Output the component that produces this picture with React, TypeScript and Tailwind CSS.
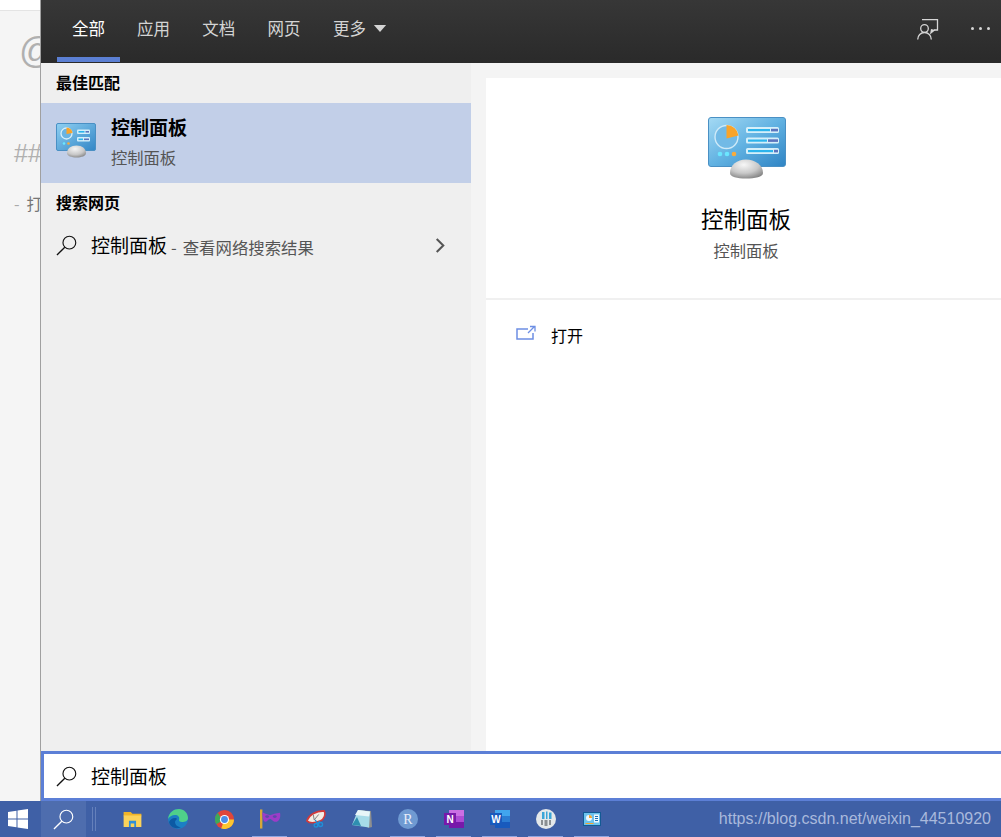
import React from 'react';

const FONT = { fontFamily: '"Noto Sans CJK SC", "Liberation Sans", sans-serif' };
const LATIN = { fontFamily: '"Liberation Sans", sans-serif' };

const SearchGlyph = ({ className, color }: { className: string; color: string }) => (
  <svg viewBox="0 0 22 22" className={className} fill="none" stroke={color} strokeWidth="1.2">
    <circle cx="14" cy="8" r="6.700" />
    <path d="M9.200 12.800 1 21" strokeWidth="1.400" />
  </svg>
);

const ControlPanelIcon = ({ className }: { className: string }) => (
  <svg viewBox="0 0 78 62" className={className}>
    <defs>
      <linearGradient id="cpScreen" x1="0" y1="0" x2="1" y2="1">
        <stop offset="0" stopColor="#a5daf4" />
        <stop offset="0.5" stopColor="#62b2e2" />
        <stop offset="1" stopColor="#2f84c4" />
      </linearGradient>
      <radialGradient id="cpDome" cx="0.42" cy="0.28" r="0.8">
        <stop offset="0" stopColor="#f7f7f7" />
        <stop offset="0.55" stopColor="#c9c9c9" />
        <stop offset="1" stopColor="#7c7c7c" />
      </radialGradient>
    </defs>
    <rect x="0.500" y="0.500" width="77" height="49" rx="2.500" fill="url(#cpScreen)" stroke="#4a90c4" />
    <circle cx="18.500" cy="20" r="11.500" fill="#72bae6" stroke="#cfeaf8" strokeWidth="1.400" />
    <path d="M18.500 8a12 12 0 0 1 12 10.500l-12 3z" fill="#f9a42a" />
    <rect x="38" y="10" width="33" height="6" rx="1.500" fill="#d5effa" />
    <rect x="40" y="12" width="22" height="2.200" fill="#2cb4ec" />
    <rect x="63" y="11.800" width="7" height="2.600" fill="#5b74bd" />
    <rect x="38" y="20.500" width="33" height="6" rx="1.500" fill="#d5effa" />
    <rect x="40" y="22.500" width="19" height="2.200" fill="#2cb4ec" />
    <rect x="60" y="22.300" width="10" height="2.600" fill="#5b74bd" />
    <rect x="38" y="31" width="33" height="6" rx="1.500" fill="#d5effa" />
    <rect x="40" y="33" width="25" height="2.200" fill="#2cb4ec" />
    <rect x="66" y="32.800" width="4" height="2.600" fill="#5b74bd" />
    <circle cx="12" cy="37" r="2.300" fill="#6be6ff" />
    <circle cx="19" cy="37" r="2.300" fill="#6be6ff" />
    <circle cx="26" cy="37" r="2.300" fill="#f8ab3c" />
    <path d="M22 56c0-8 7-13.500 16-13.500S55 48 55 56c0 4-8 5.500-17 5.500S22 60 22 56z" fill="url(#cpDome)" />
  </svg>
);

// the 32px version of the icon has only two bars and a larger dome
const SmallPanelIcon = ({ className }: { className: string }) => (
  <svg viewBox="0 0 40 35" className={className}>
    <defs>
      <linearGradient id="cpSmall" x1="0" y1="0" x2="1" y2="1">
        <stop offset="0" stopColor="#8fd0f2" />
        <stop offset="1" stopColor="#3286c6" />
      </linearGradient>
      <radialGradient id="cpSmallDome" cx="0.42" cy="0.28" r="0.8">
        <stop offset="0" stopColor="#f5f5f5" />
        <stop offset="0.6" stopColor="#c8c8c8" />
        <stop offset="1" stopColor="#7f7f7f" />
      </radialGradient>
    </defs>
    <rect x="0.500" y="0.500" width="39" height="27" rx="1.500" fill="url(#cpSmall)" stroke="#4a90c4" />
    <circle cx="10.500" cy="10.500" r="5.500" fill="#6ab4e2" stroke="#d8f0fb" strokeWidth="1.300" />
    <path d="M10.500 4.500a6 6 0 0 1 6 5.500l-6 1z" fill="#f9a42a" />
    <rect x="21" y="6.500" width="13" height="4.500" rx="1" fill="#d5effa" />
    <rect x="22.500" y="8" width="6" height="1.600" fill="#2cb4ec" />
    <rect x="29.500" y="8" width="3.500" height="1.600" fill="#5b74bd" />
    <rect x="21" y="14" width="13" height="4.500" rx="1" fill="#d5effa" />
    <rect x="22.500" y="15.500" width="4.500" height="1.600" fill="#2cb4ec" />
    <rect x="28" y="15.500" width="5" height="1.600" fill="#5b74bd" />
    <circle cx="8" cy="20.500" r="1.300" fill="#6be6ff" />
    <circle cx="12.500" cy="20.500" r="1.300" fill="#f8ab3c" />
    <path d="M11 30c0-4.500 4-7.500 9.500-7.500S30 25.500 30 30c0 3-4.500 4.500-9.500 4.500S11 33 11 30z" fill="url(#cpSmallDome)" />
  </svg>
);

const TaskIcon = ({ active, children }: { active?: boolean; children: React.ReactNode }) => (
  <div className="relative flex h-9 w-[46px] items-center justify-center">
    {children}
    {active && <div className="absolute bottom-0 left-[5px] h-[1px] w-[35px] bg-[#8fa6e0]" />}
  </div>
);

const tabs = ['应用', '文档', '网页'];

export default function App() {
  return (
    <div className="flex h-[837px] w-[1001px] flex-col overflow-hidden bg-white" style={FONT}>
      <div className="flex min-h-0 flex-1">
        {/* page behind the search flyout */}
        <div className="w-10 shrink-0 overflow-hidden bg-[#f5f5f5] text-[#b0b0b0]">
          <div className="h-[11px] border-b border-[#e4e4e4] bg-white" />
          <div className="mt-[15px] ml-[19px] text-[36px] leading-[50px] whitespace-nowrap" style={LATIN}>@</div>
          <div className="mt-[62px] ml-[14px] text-[25px] leading-[30px] whitespace-nowrap" style={LATIN}>##</div>
          <div className="mt-[23px] ml-[14px] flex text-[16px] leading-6 whitespace-nowrap text-[#777]">
            <span className="text-[#aaa]">-</span>
            <span className="ml-[7px]">打开</span>
          </div>
        </div>

        <div className="flex min-w-0 flex-1 flex-col border-l border-[#a0a0a0]">
          {/* tab bar */}
          <div className="flex h-[63px] shrink-0 items-stretch bg-gradient-to-b from-[#373737] to-[#2a2a2a] text-[16.5px] text-[#d4d4d4]">
            <div className="ml-4 flex w-[63px] flex-col items-center justify-between text-white">
              <span className="mt-[16px] leading-6">全部</span>
              <div className="mb-[1px] h-[5px] w-full bg-[#5b7fd3]" />
            </div>
            <div className="flex gap-[32.300px] pt-[16px] pl-[17px] leading-6">
              {tabs.map(t => (
                <span key={t}>{t}</span>
              ))}
            </div>
            <div className="ml-[32.300px] flex gap-[7px] pt-[16px] leading-6">
              <span>更多</span>
              <svg viewBox="0 0 14 8" className="mt-[9px] h-[7px] w-[14px]" fill="#d4d4d4"><path d="M0 0h14L7 8z" /></svg>
            </div>
            <div className="ml-auto flex items-start">
              <svg viewBox="0 0 22 21" className="mt-[19px] mr-[32px] h-[21px] w-[22px]" fill="none" stroke="#d6d6d6" strokeWidth="1.300">
                <path d="M5 .7h15.500V11H17" />
                <path d="M13 15.500l1-5.500 4.500 1z" fill="#d6d6d6" stroke="none" />
                <circle cx="7.500" cy="9.500" r="3.800" />
                <path d="M.7 20.500c0-4 3-7 6.800-7s6.800 3 6.800 7" />
              </svg>
              <div className="mt-[27px] mr-[11px] flex gap-[5px]">
                <span className="h-[3px] w-[3px] rounded-full bg-[#d6d6d6]" />
                <span className="h-[3px] w-[3px] rounded-full bg-[#d6d6d6]" />
                <span className="h-[3px] w-[3px] rounded-full bg-[#d6d6d6]" />
              </div>
            </div>
          </div>

          <div className="flex min-h-0 flex-1">
            {/* results */}
            <div className="w-[430px] shrink-0 bg-[#efefef]">
              <div className="h-10 pt-[7px] pl-[15px] text-[16px] leading-6 font-bold text-black">最佳匹配</div>
              <div className="flex h-20 bg-[#c2cfe8]">
                <SmallPanelIcon className="mt-5 ml-[15px] h-[35px] w-10 shrink-0" />
                <div className="ml-[15px]">
                  <div className="mt-[10px] text-[19px] leading-[28px] font-bold text-black">控制面板</div>
                  <div className="mt-[4px] text-[16.300px] leading-6 text-[#555]">控制面板</div>
                </div>
              </div>
              <div className="h-10 pt-[7px] pl-[15px] text-[16px] leading-6 font-bold text-black">搜索网页</div>
              <div className="flex h-[44px] items-center pl-[15px]">
                <SearchGlyph className="h-[21px] w-[21px]" color="#111" />
                <span className="ml-[14px] text-[19px] leading-7 text-black">控制面板</span>
                <span className="mt-[3px] ml-1 text-[16.400px] leading-7 whitespace-nowrap text-[#555]">
                  -<span className="ml-[6px]">查看网络搜索结果</span>
                </span>
                <svg viewBox="0 0 10 16" className="mr-[26px] ml-auto h-[15px] w-[10px]" fill="none" stroke="#555" strokeWidth="2.200"><path d="M1.500 1l7 7-7 7" /></svg>
              </div>
            </div>

            {/* preview */}
            <div className="min-w-0 flex-1 bg-[#f4f4f4] pt-[15px] pl-[15px]">
              <div className="flex h-full flex-col bg-white">
                <div className="flex h-[222px] shrink-0 flex-col items-center border-b-2 border-[#f0f0f0] pl-[5px]">
                  <ControlPanelIcon className="mt-[39px] ml-[2px] h-[62px] w-[78px]" />
                  <div className="mt-[23px] text-[22.500px] leading-8 text-black">控制面板</div>
                  <div className="mt-[4px] text-[16.300px] leading-6 text-[#555]">控制面板</div>
                </div>
                <div className="flex items-center pt-[23px] pl-[30px]">
                  <svg viewBox="0 0 20 16" className="mb-[4px] h-4 w-5" fill="none" stroke="#6d8fe4" strokeWidth="1.500">
                    <path d="M12 4H1v10h16V8" />
                    <path d="M12 8l6-6M14 1.500h5v5" strokeWidth="1.300" />
                  </svg>
                  <span className="ml-[15px] text-[16px] leading-6 text-black">打开</span>
                </div>
              </div>
            </div>
          </div>

          {/* search box */}
          <div className="flex h-[50px] shrink-0 items-center border-[3px] border-r-0 border-[#5c7fd6] bg-white pl-[12px]">
            <SearchGlyph className="h-[21px] w-[21px]" color="#111" />
            <span className="ml-[14px] text-[19px] leading-7 text-black">控制面板</span>
          </div>
        </div>
      </div>

      {/* taskbar */}
      <div className="flex h-9 shrink-0 items-center bg-[#3f60a6]">
        <div className="flex h-9 w-[41px] items-center pl-2">
          <svg viewBox="0 0 20 20" className="h-5 w-5" fill="#fff">
            <path d="M0 3l8.500-1.200V9.500H0zM9.500 1.600 20 0v9.500H9.500zM0 10.500h8.500v7.700L0 17zM9.500 10.500H20V20L9.500 18.400z" />
          </svg>
        </div>
        <div className="flex h-9 w-[45px] items-center justify-center bg-[#4e6dae]">
          <SearchGlyph className="h-[21px] w-[21px]" color="#fff" />
        </div>
        <div className="ml-[6px] flex h-6 gap-[2px]">
          <div className="w-[1px] bg-[#6480bb]" />
          <div className="w-[1px] bg-[#6480bb]" />
        </div>
        <div className="ml-[13px] flex items-center">
          <TaskIcon>
            <svg viewBox="0 0 20 18" className="h-[16px] w-[19px]">
              <path d="M0 1h8l2 2h10v3H0z" fill="#f0b429" />
              <path d="M0 5h20v13H0z" fill="#fbd25a" />
              <path d="M6 11h8v7h-2v-4H8v4H6z" fill="#2f8fd8" />
            </svg>
          </TaskIcon>
          <TaskIcon>
            <svg viewBox="0 0 20 20" className="h-5 w-5">
              <circle cx="10" cy="10" r="10" fill="#1b7fc4" />
              <path d="M0 10C1 3 6 0 11 0c5 0 9 4 9 9 0 3-3 4-6 4-2 0-3-1-3-2 1-3-1-5-4-5-3 0-6 2-7 4z" fill="#4fd08a" />
              <path d="M7 13c0 3 3 5 6 5-5 3-11 0-12-5 1-2 3-4 6-4 1 0 2 .5 2 1-1 1-2 2-2 3z" fill="#0c59a4" />
            </svg>
          </TaskIcon>
          <TaskIcon>
            <svg viewBox="0 0 20 20" className="h-[19px] w-[19px]">
              <circle cx="10" cy="10" r="10" fill="#e0463a" />
              <path d="M10 10 1.300 15A10 10 0 0 1 3 3l4 7z" fill="#3da95a" />
              <path d="M10 10l-3.500 9.400A10 10 0 0 0 20 10z" fill="#fbc531" />
              <circle cx="10" cy="10" r="4.800" fill="#fff" />
              <circle cx="10" cy="10" r="3.600" fill="#4a8ce8" />
            </svg>
          </TaskIcon>
          <TaskIcon active>
            <svg viewBox="0 0 22 20" className="h-5 w-[21px]">
              <rect x="0" y="0" width="2.500" height="20" fill="#d8a838" />
              <path d="M2.500 3c3 2 5 2 8 3 3-1 6-2 10.500-2.500 1 5-1 9.500-4.500 9.500-3 0-4-3-6-3s-3 3-5 3-3-5-3-10z" fill="#9c3cc8" />
              <ellipse cx="7.500" cy="7.500" rx="2" ry="1.400" fill="#5a4aa8" />
              <ellipse cx="15.500" cy="7.500" rx="2" ry="1.400" fill="#5a4aa8" />
            </svg>
          </TaskIcon>
          <TaskIcon>
            <svg viewBox="0 0 22 20" className="h-5 w-5">
              <path d="M1 12C3 6 10 1 20 1c2 4 0 9-4 11-5 2-12 3-15 0z" fill="#f3eee6" stroke="#d23a3a" strokeWidth="1.800" />
              <path d="M9 11 8 5M9 11l5-6" stroke="#777" strokeWidth="1" />
              <circle cx="16" cy="16" r="2.200" fill="none" stroke="#1f8fd8" strokeWidth="1.500" />
              <circle cx="11" cy="17" r="2" fill="none" stroke="#1f8fd8" strokeWidth="1.500" />
              <path d="M10 11l3 4M15 12l-2 3" stroke="#1f8fd8" strokeWidth="1.400" />
            </svg>
          </TaskIcon>
          <TaskIcon>
            <svg viewBox="0 0 20 20" className="h-5 w-5">
              <path d="M6 1l13 1 1 16-4 1z" fill="#8f8f8f" />
              <path d="M6 1l12 1.500-1 16L0 16z" fill="#a6dbe8" />
              <path d="M6 1l12 1.500-1 5L3 6z" fill="#e8f6f8" />
              <path d="M0 16l5-8 4 9z" fill="#2f8fb0" />
            </svg>
          </TaskIcon>
          <TaskIcon active>
            <div className="flex h-5 w-5 items-center justify-center rounded-full bg-[#6f9ad2] text-[14px] text-[#e8eef8]" style={{ fontFamily: '"Liberation Serif", serif' }}>R</div>
          </TaskIcon>
          <TaskIcon active>
            <div className="relative h-[18px] w-5">
              <div className="ml-[5px] flex h-[18px] w-[15px] flex-col">
                <div className="flex-1 bg-[#ca6fe4]" />
                <div className="flex-1 bg-[#ae4bd5]" />
                <div className="flex-1 bg-[#7719aa]" />
              </div>
              <div className="absolute top-[3px] left-0 flex h-3 w-3 items-center justify-center bg-[#7719aa] text-[10px] font-bold text-white" style={LATIN}>N</div>
            </div>
          </TaskIcon>
          <TaskIcon active>
            <div className="relative h-[18px] w-5">
              <div className="ml-[5px] flex h-[18px] w-[15px] flex-col">
                <div className="flex-1 bg-[#41a5ee]" />
                <div className="flex-1 bg-[#2b7cd3]" />
                <div className="flex-1 bg-[#185abd]" />
              </div>
              <div className="absolute top-[3px] left-0 flex h-3 w-3 items-center justify-center bg-[#185abd] text-[10px] font-bold text-white" style={LATIN}>W</div>
            </div>
          </TaskIcon>
          <TaskIcon active>
            <svg viewBox="0 0 20 20" className="h-5 w-5">
              <circle cx="10" cy="10" r="10" fill="#e4e8ea" />
              <path d="M6 3h2.500v7H6zM10 2.500h1.500V10H10zM13 3.500h2.500V10H13z" fill="#3aa5d8" />
              <path d="M5 11h2v5H5zM8.500 11h3v6h-3zM13 11h2v5h-2z" fill="#8a8f92" />
            </svg>
          </TaskIcon>
          <TaskIcon active>
            <svg viewBox="0 0 18 14" className="h-[14px] w-[18px]">
              <rect x=".5" y=".5" width="17" height="13" fill="#6cc2ee" stroke="#135a94" />
              <circle cx="6" cy="6" r="3" fill="#f1f8fc" />
              <path d="M6 3a3 3 0 0 1 3 3H6z" fill="#f7a52e" />
              <path d="M11 2.500h5v8h-5z" fill="#eef8fd" />
              <path d="M12 4h3v1h-3zM12 6h3v1h-3zM12 8h3v1h-3z" fill="#1f6fb4" />
              <path d="M2.500 11h8v1h-8z" fill="#f7a52e" />
            </svg>
          </TaskIcon>
        </div>
        <div className="ml-auto pr-[10px] text-[16px] text-[#a9b9dc]" style={LATIN}>https://blog.csdn.net/weixin_44510920</div>
      </div>
    </div>
  );
}
